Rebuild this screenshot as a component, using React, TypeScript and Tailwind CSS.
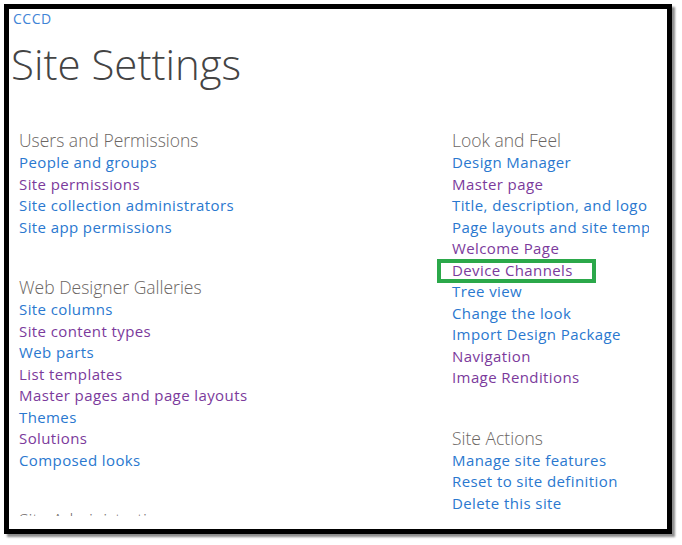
import React from "react";

type L = { t: string; v?: boolean; box?: boolean };

const left1: L[] = [
  { t: "People and groups" },
  { t: "Site permissions", v: true },
  { t: "Site collection administrators" },
  { t: "Site app permissions" },
];
const left2: L[] = [
  { t: "Site columns" },
  { t: "Site content types", v: true },
  { t: "Web parts" },
  { t: "List templates", v: true },
  { t: "Master pages and page layouts", v: true },
  { t: "Themes" },
  { t: "Solutions", v: true },
  { t: "Composed looks" },
];
const right1: L[] = [
  { t: "Design Manager" },
  { t: "Master page", v: true },
  { t: "Title, description, and logo" },
  { t: "Page layouts and site templates" },
  { t: "Welcome Page", v: true },
  { t: "Device Channels", v: true, box: true },
  { t: "Tree view" },
  { t: "Change the look" },
  { t: "Import Design Package" },
  { t: "Navigation", v: true },
  { t: "Image Renditions", v: true },
];
const right2: L[] = [
  { t: "Manage site features" },
  { t: "Reset to site definition" },
  { t: "Delete this site" },
];

function Section({ title, links, className = "" }: { title: string; links: L[]; className?: string }) {
  return (
    <div className={className}>
      <div className="text-[17.5px] leading-[24px] text-[#6b6663] font-light whitespace-nowrap">{title}</div>
      <ul>
        {links.map((l) => (
          <li
            key={l.t}
            className={`relative text-[15px] leading-[21.5px] tracking-[0.4px] whitespace-nowrap ${l.v ? "text-[#7b3a9c]" : "text-[#2a78cf]"}`}
          >
            {l.box && (
              <span className="absolute left-[-15px] top-[-1px] w-[159px] h-[24px] border-[4px] border-[#2ba84a]" />
            )}
            {l.t}
          </li>
        ))}
      </ul>
    </div>
  );
}

export default function App() {
  return (
    <div className="w-[682px] h-[545px] bg-white pt-[4px] pl-[4px]" style={{ fontFamily: '"Open Sans", "Noto Sans", sans-serif' }}>
      <div className="w-[668px] h-[530px] border-[5px] border-black bg-white shadow-[3px_3px_2px_rgba(0,0,0,0.45)] overflow-hidden">
        <div className="w-[640px] h-[507px] overflow-hidden">
          <div className="pl-[4px] pt-[1px] text-[14px] leading-[18px] tracking-[0.5px] text-[#3f84d6]">CCCD</div>
          <div className="pl-[2px] mt-[10px] text-[42px] leading-[52px] font-light text-[#444]">Site Settings</div>
          <div className="flex pl-[10px] pt-[38px]">
            <div className="w-[433px] shrink-0">
              <Section title="Users and Permissions" links={left1} />
              <Section title="Web Designer Galleries" links={left2} className="mt-[37px]" />
              <Section title="Site Administration" links={[]} className="mt-[37px]" />
            </div>
            <div className="shrink-0">
              <Section title="Look and Feel" links={right1} />
              <Section title="Site Actions" links={right2} className="mt-[37px]" />
            </div>
          </div>
        </div>
      </div>
    </div>
  );
}
